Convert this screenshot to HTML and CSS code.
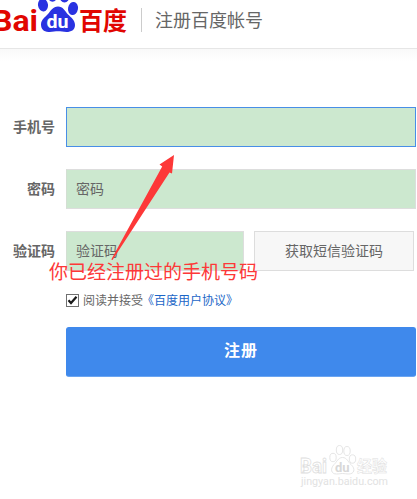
FILE: index.html
```html
<!DOCTYPE html>
<html lang="zh-CN">
<head>
    <meta charset="UTF-8">
    <title>注册百度帐号</title>
    <link rel="stylesheet" href="styles.css">
</head>
<body>
    <header class="header">
        <svg class="logo" width="130" height="40" viewBox="0 0 130 40">
            <g class="logo-text">
                <text x="-8" y="31" font-size="29" textLength="46" lengthAdjust="spacingAndGlyphs">Bai</text>
                <text class="logo-cn" x="79" y="29.5" font-size="24.5" textLength="48" lengthAdjust="spacingAndGlyphs">百度</text>
            </g>
            <g fill="#2932e1">
                <ellipse cx="43" cy="5" rx="5" ry="6.5" transform="rotate(-8 43 5)"/>
                <ellipse cx="52.5" cy="-4.5" rx="5" ry="6.2"/>
                <ellipse cx="64.5" cy="-4.5" rx="5.2" ry="7"/>
                <ellipse cx="73" cy="8.5" rx="5" ry="6.5" transform="rotate(10 73 8.5)"/>
                <path d="M58 6.5C63 6.5 65 11 68 14.500C71 17.500 75 20 75 25C75 30 71 32 66.500 32C63 32 61 31.300 58 31.300C55 31.300 52.500 32.200 48.500 32C43.500 31.700 41 29 41 24.500C41 19.500 45.500 17 48 14C51 10.500 53 6.500 58 6.500Z"/>
            </g>
            <text class="logo-du" x="46.500" y="27.500" font-size="19" textLength="22" lengthAdjust="spacingAndGlyphs">du</text>
        </svg>
        <h1 class="title">注册百度帐号</h1>
    </header>

    <form class="form">
        <div class="row">
            <label class="label" for="phone">手机号</label>
            <input class="input active" id="phone" type="text">
        </div>
        <div class="row">
            <label class="label" for="password">密码</label>
            <input class="input" id="password" type="password" placeholder="密码">
        </div>
        <div class="row">
            <label class="label" for="code">验证码</label>
            <input class="input code" id="code" type="text" placeholder="验证码">
            <button class="send" type="button">获取短信验证码</button>
        </div>
        <div class="agree">
            <svg class="check" width="13" height="13" viewBox="0 0 13 13">
                <rect x=".5" y=".5" width="12" height="12" fill="#fff" stroke="#707070"/>
                <path d="M2.500 6.300L5 9L10.500 2.800" fill="none" stroke="#1a1a1a" stroke-width="2.200"/>
            </svg>
            <span class="agree-text">阅读并接受<a class="link" href="#">《百度用户协议》</a></span>
        </div>
        <button class="submit" type="button">注册</button>
    </form>

    <!-- pointer to the phone field -->
    <svg class="arrow" width="70" height="110" viewBox="0 0 70 110">
        <path d="M64 0L49.500 9.500L52.200 11.500L1.300 104.500L2.500 105L59.500 17.500L62 18.500Z" fill="#fd3838"/>
    </svg>
    <p class="note">你已经注册过的手机号码</p>

    <svg class="watermark" width="100" height="50" viewBox="0 0 100 50">
        <g fill="#fff" stroke="#dedede" stroke-width=".8">
            <text x="3" y="29" font-size="20" textLength="27" lengthAdjust="spacingAndGlyphs">Bai</text>
            <ellipse cx="36" cy="13.500" rx="3.200" ry="4.200"/>
            <ellipse cx="42.500" cy="6" rx="3.200" ry="4.500"/>
            <ellipse cx="50" cy="7" rx="3.200" ry="4.500"/>
            <ellipse cx="55.500" cy="15" rx="3.200" ry="4.200"/>
            <path d="M45.500 13.500C50 13.500 51 18 54 20.500C59 25 57 30 52 30C49 30 48 29.500 45.500 29.500C43 29.500 42 30 39.500 30C34 30 33 25 37 20.500C40 18 41 13.500 45.500 13.500Z"/>
            <text class="wm-du" x="38" y="27.500" font-size="13">du</text>
            <text x="60" y="28" font-size="16" textLength="30" lengthAdjust="spacingAndGlyphs" stroke-width=".5">经验</text>
        </g>
        <text class="wm-url" x="4" y="41" textLength="87" lengthAdjust="spacingAndGlyphs">jingyan.baidu.com</text>
    </svg>
</body>
</html>
```

FILE: styles.css
```css
* {
    box-sizing: border-box;
}
body {
    position: relative;
    width: 417px;
    height: 499px;
    margin: 0;
    overflow: hidden;
    background: linear-gradient(#f9f9f9, #fff) 0 49px / 100% 12px no-repeat #fff;
    color: #666;
    font-family: "Liberation Sans", "Noto Sans CJK SC", sans-serif;
    font-size: 14px;
}
.header {
    display: flex;
    height: 49px;
    background: #fff;
    border-bottom: 1px solid #e6e6e6;
}
.logo {
    flex: none;
}
.logo-text {
    fill: #e10601;
    font-family: Roboto, "Noto Sans CJK SC", sans-serif;
    font-weight: bold;
}
.logo-du {
    fill: #fff;
    font-family: Roboto, sans-serif;
    font-weight: bold;
}
.title {
    height: 24px;
    margin: 8px 0 0 11px;
    padding-left: 13px;
    border-left: 1px solid #ccc;
    font-size: 18px;
    font-weight: normal;
    line-height: 27px;
}
.form {
    display: flex;
    flex-direction: column;
    padding-top: 58px;
}
.row {
    display: flex;
    align-items: center;
    height: 40px;
    margin-bottom: 22px;
}
.label {
    width: 55px;
    margin-right: 11px;
    padding-bottom: 2px;
    font-weight: bold;
    text-align: right;
}
.input {
    width: 350px;
    height: 40px;
    padding: 0 9px 1px;
    border: 1px solid #ddd;
    border-left-color: #d3dfd3;
    outline: none;
    background: #cce8cf;
    font: inherit;
}
.input::placeholder {
    color: #666;
    opacity: 1;
}
.active {
    border-color: #488ee7;
}
.code {
    width: 178px;
}
.send {
    width: 160px;
    height: 40px;
    margin-left: 10px;
    padding: 0 0 3px;
    border: 1px solid #ddd;
    background: #f7f7f7;
    color: #666;
    font: inherit;
}
.agree {
    display: flex;
    align-items: center;
    height: 15px;
    margin-left: 66px;
    font-size: 12px;
    white-space: nowrap;
}
.check {
    margin-right: 4px;
}
.agree-text {
    padding-bottom: 3px;
}
.link {
    margin-left: -1px;
    color: #1b66c7;
    text-decoration: none;
}
.submit {
    width: 350px;
    height: 50px;
    margin: 19px 0 0 66px;
    padding: 0 0 6px;
    border: 1px solid #3f89ec;
    border-bottom-color: #6ba5f1;
    border-radius: 3px;
    background: #3f89ec;
    color: #fff;
    font: bold 16px "Noto Sans CJK SC", sans-serif;
    letter-spacing: 1px;
}
.arrow {
    position: absolute;
    left: 110px;
    top: 155px;
}
.note {
    position: absolute;
    left: 49px;
    top: 260px;
    margin: 0;
    color: #fd3838;
    font-size: 19px;
    line-height: 26px;
    white-space: nowrap;
}
.watermark {
    position: absolute;
    left: 297px;
    top: 444px;
    font-family: Roboto, "Noto Sans CJK SC", sans-serif;
    font-weight: bold;
}
.wm-du {
    fill: #d8d8d8;
    stroke: none;
}
.wm-url {
    fill: #e2e2e2;
    font-size: 10px;
    font-weight: normal;
}
```
